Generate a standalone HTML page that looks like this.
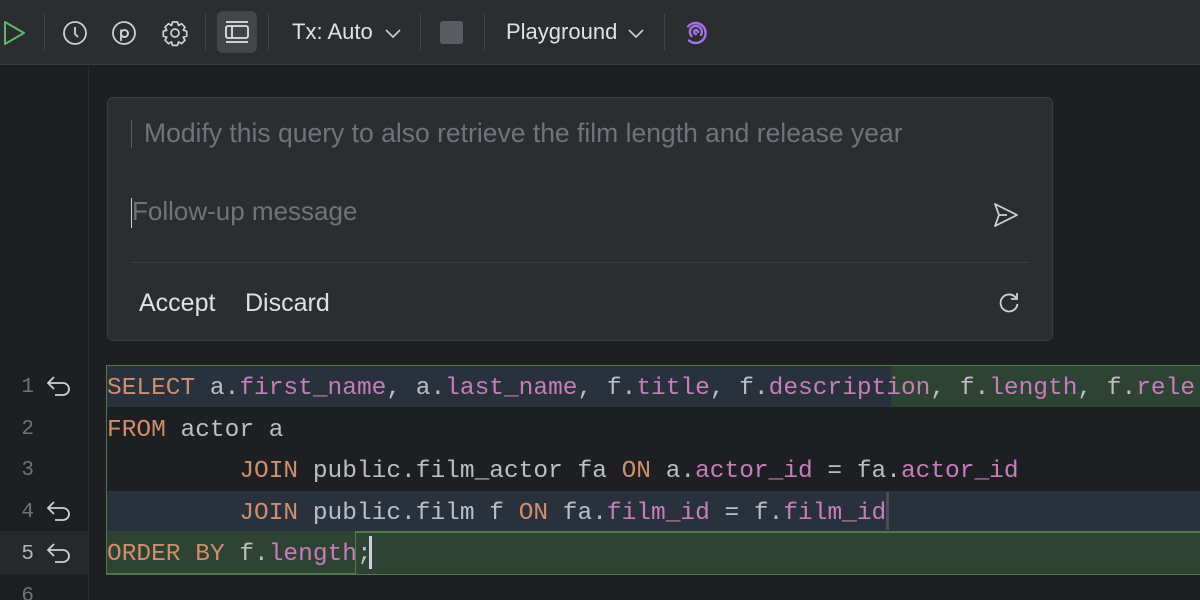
<!DOCTYPE html>
<html style="overflow:hidden;width:1200px;height:600px"><head><meta charset="utf-8"><style>
*{margin:0;padding:0;box-sizing:border-box}
body{width:1200px;height:600px;overflow:hidden;background:#1e1f22;font-family:"Liberation Sans",sans-serif;position:relative}
.tb{position:absolute;left:0;top:0;width:1200px;height:65px;background:#2b2d30;border-bottom:1px solid #393b40}
.sep{position:absolute;top:14px;width:1px;height:36px;background:#43454a}
.ic{position:absolute}
.t{position:absolute;color:#dfe1e5;font-size:22px;top:19px}
.gut{position:absolute;left:88px;top:66px;width:1px;height:534px;background:#2b2d30}
.pop{position:absolute;left:107px;top:97px;width:946px;height:244px;background:#2b2d30;border:1px solid #393b40;border-radius:6px}
.code{position:absolute;left:107px;font-family:"Liberation Mono",monospace;font-size:24.5px;color:#bcbec4;white-space:pre;line-height:41.6px}
.k{color:#cf8e6d}.f{color:#c77dbb}
.ln{position:absolute;left:10px;width:24px;text-align:right;font-family:"Liberation Mono",monospace;font-size:21px;color:#6f737a;line-height:41.6px}
.rv{position:absolute;left:45px}
</style></head><body>
<div class="tb">
<svg class="ic" style="left:2px;top:20px" width="24" height="26" viewBox="0 0 24 26"><path d="M3 2 L22 13 L3 24 Z" fill="none" stroke="#5fb865" stroke-width="2" stroke-linejoin="round"/></svg>
<div class="sep" style="left:44px"></div>
<svg class="ic" style="left:62px;top:20px" width="26" height="26" viewBox="0 0 26 26"><circle cx="13" cy="13" r="11" fill="none" stroke="#ced0d6" stroke-width="1.8"/><path d="M13 7v7l3 3" fill="none" stroke="#ced0d6" stroke-width="1.8"/></svg>
<svg class="ic" style="left:111px;top:20px" width="26" height="26" viewBox="0 0 26 26"><circle cx="13" cy="13" r="11" fill="none" stroke="#ced0d6" stroke-width="1.8"/><path d="M10 21V9.5M10 13a3.5 3.5 0 1 1 0 1" fill="none" stroke="#ced0d6" stroke-width="1.8"/><circle cx="13.5" cy="13.5" r="3.5" fill="none" stroke="#ced0d6" stroke-width="1.8"/></svg>
<svg class="ic" style="left:161px;top:19px" width="28" height="28" viewBox="0 0 28 28"><path d="M11.5 3h5l1 3.5 3-1.8 3.5 3.5-1.8 3 3.5 1v5l-3.5 1 1.8 3-3.5 3.5-3-1.8-1 3.5h-5l-1-3.5-3 1.8-3.5-3.5 1.8-3-3.5-1v-5l3.5-1-1.8-3 3.5-3.5 3 1.8z" fill="none" stroke="#ced0d6" stroke-width="1.7" stroke-linejoin="round"/><circle cx="14" cy="14" r="4" fill="none" stroke="#ced0d6" stroke-width="1.7"/></svg>
<div class="sep" style="left:205px"></div>
<div style="position:absolute;left:217px;top:11px;width:40px;height:42px;background:#43454a;border-radius:6px"></div>
<svg class="ic" style="left:224px;top:20px" width="26" height="24" viewBox="0 0 26 24"><path d="M2 2h22M2 22h22" stroke="#dfe1e5" stroke-width="1.8"/><rect x="2" y="6" width="22" height="12" rx="2" fill="none" stroke="#dfe1e5" stroke-width="1.8"/><path d="M8 6v12" stroke="#dfe1e5" stroke-width="1.8"/></svg>
<div class="sep" style="left:268px"></div>
<div class="t" style="left:292px">Tx: Auto</div>
<svg class="ic" style="left:385px;top:29px" width="16" height="10" viewBox="0 0 16 10"><path d="M1 1l7 7 7-7" fill="none" stroke="#ced0d6" stroke-width="1.6"/></svg>
<div class="sep" style="left:420px"></div>
<div style="position:absolute;left:440px;top:21px;width:23px;height:23px;background:#5a5c61;border-radius:3px"></div>
<div class="sep" style="left:484px"></div>
<div class="t" style="left:506px">Playground</div>
<svg class="ic" style="left:628px;top:29px" width="16" height="10" viewBox="0 0 16 10"><path d="M1 1l7 7 7-7" fill="none" stroke="#ced0d6" stroke-width="1.6"/></svg>
<div class="sep" style="left:664px"></div>
<svg class="ic" style="left:683px;top:20px" width="26" height="26" viewBox="0 0 26 26"><path d="M5 6.5A10 10 0 1 1 6 20.5M8.5 16A6 6 0 1 1 18 15M13 14a2 2 0 1 1 2-2" fill="none" stroke="#a571e6" stroke-width="2.4" stroke-linecap="round"/></svg>
</div>
<div class="gut"></div>

<div class="pop">
<div style="position:absolute;left:23px;top:22px;width:1px;height:28px;background:#5a5d63"></div>
<div style="position:absolute;left:36px;top:20px;font-size:26.5px;color:#6f737a">Modify this query to also retrieve the film length and release year</div>
<div style="position:absolute;left:23px;top:100px;width:1px;height:30px;background:#ced0d6"></div>
<div style="position:absolute;left:24px;top:98px;font-size:26px;color:#6f737a">Follow-up message</div>
<svg class="ic" style="left:884px;top:103px" width="28" height="28" viewBox="0 0 28 28"><path d="M3 3L25 14 3 25 7 14Z M7 14h8" fill="none" stroke="#ced0d6" stroke-width="1.8" stroke-linejoin="round"/></svg>
<div style="position:absolute;left:23px;top:164px;width:898px;height:1px;background:#393b40"></div>
<div style="position:absolute;left:31px;top:191px;font-size:25px;color:#dfe1e5">Accept</div>
<div style="position:absolute;left:137px;top:191px;font-size:25px;color:#dfe1e5">Discard</div>
<svg class="ic" style="left:888px;top:192px" width="26" height="26" viewBox="0 0 26 26"><path d="M20 8A8.5 8.5 0 1 0 21.5 14" fill="none" stroke="#ced0d6" stroke-width="1.8"/><path d="M21 3v6h-6" fill="none" stroke="#ced0d6" stroke-width="1.8"/></svg>
</div>

<div style="position:absolute;left:107px;top:366px;width:784px;height:41px;background:#29313c"></div>
<div style="position:absolute;left:891px;top:366px;width:309px;height:41px;background:#2e4334"></div>
<div style="position:absolute;left:107px;top:491px;width:1093px;height:40px;background:#29313c"></div>
<div style="position:absolute;left:107px;top:531px;width:1093px;height:43px;background:#2e4334"></div>
<div style="position:absolute;left:0;top:531px;width:88px;height:43px;background:#26282c"></div>
<div style="position:absolute;left:106px;top:365px;width:1094px;height:210px;border:1.5px solid #4e7a48;border-right:none"></div>
<div style="position:absolute;left:355px;top:531px;width:845px;height:1.5px;background:#4e7a48"></div>
<div style="position:absolute;left:106px;top:531px;width:250px;height:43px;border:1.5px solid #4e7a48;border-top:none"></div>
<div style="position:absolute;left:886px;top:492px;width:3px;height:38px;background:#4a4d52"></div>
<div style="position:absolute;left:369px;top:536px;width:3px;height:33px;background:#ced0d6"></div>

<div style="position:absolute;left:0;top:0;width:1200px;height:600px;overflow:hidden">
<div class="code" style="top:368px"><span class="k">SELECT</span> a.<span class="f">first_name</span>, a.<span class="f">last_name</span>, f.<span class="f">title</span>, f.<span class="f">description</span>, f.<span class="f">length</span>, f.<span class="f">rele</span>
<span class="k">FROM</span> actor a
         <span class="k">JOIN</span> public.film_actor fa <span class="k">ON</span> a.<span class="f">actor_id</span> = fa.<span class="f">actor_id</span>
         <span class="k">JOIN</span> public.film f <span class="k">ON</span> fa.<span class="f">film_id</span> = f.<span class="f">film_id</span>
<span class="k">ORDER BY</span> f.<span class="f">length</span>;</div>
<div class="ln" style="top:367px">1</div>
<div class="ln" style="top:409px">2</div>
<div class="ln" style="top:450px">3</div>
<div class="ln" style="top:492px">4</div>
<div class="ln" style="top:534px;color:#b4b8bf">5</div>
<div class="ln" style="top:576px">6</div>
</div>
<svg class="rv" style="top:375px" width="28" height="24" viewBox="0 0 28 24"><path d="M9 2L3 8l6 6M3 8h15a6 6 0 0 1 0 12H10" fill="none" stroke="#ced0d6" stroke-width="1.8"/></svg>
<svg class="rv" style="top:500px" width="28" height="24" viewBox="0 0 28 24"><path d="M9 2L3 8l6 6M3 8h15a6 6 0 0 1 0 12H10" fill="none" stroke="#ced0d6" stroke-width="1.8"/></svg>
<svg class="rv" style="top:542px" width="28" height="24" viewBox="0 0 28 24"><path d="M9 2L3 8l6 6M3 8h15a6 6 0 0 1 0 12H10" fill="none" stroke="#ced0d6" stroke-width="1.8"/></svg>
</body></html>
